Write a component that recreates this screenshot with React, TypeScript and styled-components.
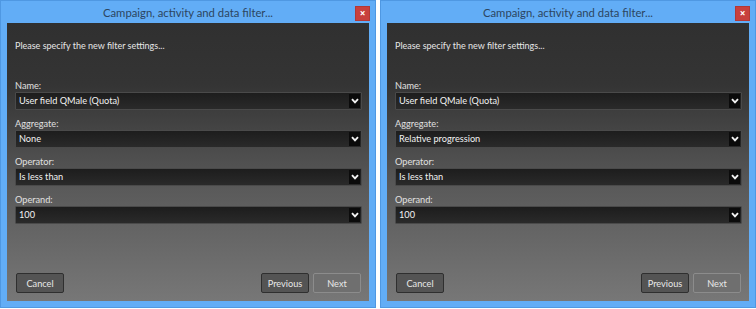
import React from "react";
import styled, { createGlobalStyle } from "styled-components";

type Field = {
	/** label above the drop-down */
	label: string;
	/** value currently shown in the drop-down */
	value: string;
};

type DialogProps = {
	/** the filter settings shown in this dialog */
	fields: Field[];
};

const GlobalStyle = createGlobalStyle`
	html, body {
		margin: 0;
		padding: 0;
		background: #ffffff;
	}

	body {
		font-family: Lato, "Open Sans", sans-serif;
	}
`;

function Chevron() {
	return (
		<svg width="8" height="6" viewBox="0 0 8 6">
			<path d="M1 1.2 L4 4.4 L7 1.2" fill="none" stroke="#f2f2f2" strokeWidth="1.9" />
		</svg>
	);
}

function Dialog({ fields }: DialogProps) {
	return (
		<Window>
			<TitleBar>
				<Title>Campaign, activity and data filter...</Title>
				<CloseButton>×</CloseButton>
			</TitleBar>
			<Body>
				<Intro>Please specify the new filter settings...</Intro>
				<Fields>
					{fields.map((f) => (
						<FieldGroup key={f.label}>
							<Label>{f.label}</Label>
							<Select>
								<SelectValue>{f.value}</SelectValue>
								<Arrow>
									<Chevron />
								</Arrow>
							</Select>
						</FieldGroup>
					))}
				</Fields>
				<ButtonRow>
					<Button>Cancel</Button>
					<Spacer />
					<Button>Previous</Button>
					<Button $primary>Next</Button>
				</ButtonRow>
			</Body>
		</Window>
	);
}

export default function App() {
	const base = [
		{ label: "Name:", value: "User field QMale (Quota)" },
		{ label: "Aggregate:", value: "None" },
		{ label: "Operator:", value: "Is less than" },
		{ label: "Operand:", value: "100" },
	];
	const changed = base.map((f) =>
		f.label === "Aggregate:" ? { ...f, value: "Relative progression" } : f
	);

	return (
		<>
			<GlobalStyle />
			<Screen>
				<Dialog fields={base} />
				<Dialog fields={changed} />
			</Screen>
		</>
	);
}

const Screen = styled.div`
	display: flex;
	flex-direction: row;
	gap: 4px;
	width: 756px;
	height: 309px;
`;

const Window = styled.div`
	width: 376px;
	height: 308px;
	box-sizing: border-box;
	display: flex;
	flex-direction: column;
	background: #62adf6;
	border: 1px solid #4f98e2;
`;

const TitleBar = styled.div`
	height: 22px;
	display: flex;
	flex-direction: row;
	align-items: center;
	padding: 0 6px 0 19px;
`;

const Title = styled.div`
	flex: 1;
	text-align: center;
	font-size: 11.3px;
	color: #2c4560;
	line-height: 22px;
	margin-top: 1px;
`;

const CloseButton = styled.div`
	width: 13px;
	height: 13px;
	margin-top: 2px;
	background: #c8403d;
	color: #ffffff;
	font-family: "Open Sans", sans-serif;
	font-size: 10px;
	font-weight: 700;
	line-height: 12px;
	text-align: center;
	box-shadow: 0 0 0 1px #b33835;
`;

const Body = styled.div`
	flex: 1;
	margin: 0 6px 6px 6px;
	display: flex;
	flex-direction: column;
	padding: 16px 7px 8px 8px;
	background: linear-gradient(#303030 0%, #343434 22%, #5a5a5a 60%, #777777 100%);
`;

const Intro = styled.div`
	font-size: 9px;
	line-height: 14px;
	color: #e6e6e6;
`;

const Fields = styled.div`
	display: flex;
	flex-direction: column;
	gap: 8px;
	margin-top: 27px;
`;

const FieldGroup = styled.div`
	display: flex;
	flex-direction: column;
`;

const Label = styled.div`
	font-size: 9.2px;
	line-height: 12px;
	color: #e0e0e0;
`;

const Select = styled.div`
	height: 18px;
	box-sizing: border-box;
	display: flex;
	flex-direction: row;
	align-items: stretch;
	border: 1px solid #4a4a4a;
	border-radius: 1px;
	background: linear-gradient(#1d1d1d, #2a2a2a);
`;

const SelectValue = styled.div`
	flex: 1;
	padding-left: 3px;
	font-size: 9.2px;
	line-height: 16px;
	color: #f2f2f2;
`;

const Arrow = styled.div`
	width: 11px;
	margin: 1px;
	display: flex;
	align-items: center;
	justify-content: center;
	background: #0b0b0b;
`;

const ButtonRow = styled.div`
	margin-top: auto;
	display: flex;
	flex-direction: row;
	gap: 4px;
	padding: 0 1px;
`;

const Spacer = styled.div`
	flex: 1;
`;

const Button = styled.div<{ $primary?: boolean }>`
	width: 48px;
	height: 20px;
	box-sizing: border-box;
	display: flex;
	align-items: center;
	justify-content: center;
	border-radius: 2px;
	font-size: 9.2px;
	color: #e8e8e8;
	background: ${(p) => (p.$primary ? "#6f6f6f" : "#545454")};
	border: 1px solid ${(p) => (p.$primary ? "#8c8c8c" : "#2f2f2f")};
`;
